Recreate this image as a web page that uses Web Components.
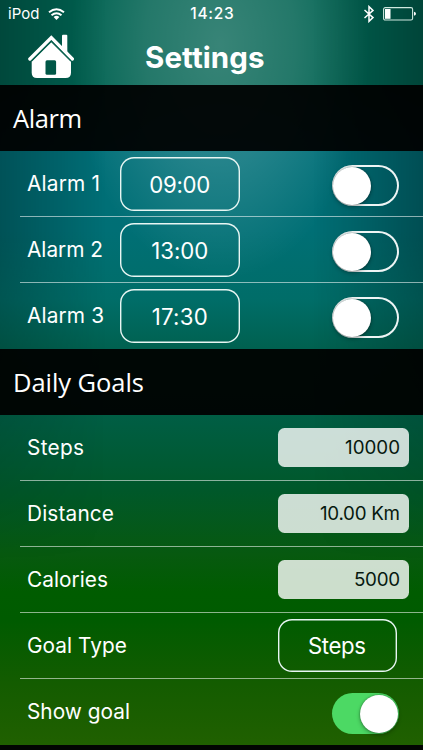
<!DOCTYPE html>
<html lang="en">
<head>
<meta charset="utf-8">
<title>Settings</title>
<style>
html,body{margin:0;height:750px;overflow:hidden;background:#000}
body{font-family:Inter,"Liberation Sans",sans-serif;color:#fff}
</style>
</head>
<body>
<settings-screen></settings-screen>
<script>
const define = (name, html, setup) => customElements.define(name, class extends HTMLElement {
  connectedCallback() {
    if (this.shadowRoot) return;
    const t = document.createElement('template');
    t.innerHTML = html;
    this.attachShadow({mode: 'open'}).append(t.content.cloneNode(true));
    if (setup) setup(this);
  }
});

define('status-bar', `
<style>
:host{display:grid;grid-template-columns:1fr auto 1fr;align-items:center;height:27px;padding:0 7px 0 8px}
.l{display:flex;align-items:center;gap:8.5px}
.r{display:flex;align-items:center;justify-content:flex-end;gap:8px}
.l tracked-text{font-size:15px}
.c{font-size:15.5px;font-weight:500;margin-top:1px}
svg{display:block}
</style>
<div class="l"><tracked-text w="31.5">iPod</tracked-text>
<svg width="17" height="12" viewBox="0 0 17 12" fill="none" stroke="#fff" stroke-width="1.9"><path d="M1 4.3Q8.5 -2 16 4.3M3.5 7.3Q8.5 3 13.5 7.3"/><path d="M5.6 9.1Q8.5 6.6 11.4 9.1L8.5 12Z" fill="#fff" stroke="none"/></svg></div>
<tracked-text class="c" w="43.5">14:23</tracked-text>
<div class="r">
<svg width="12" height="18" viewBox="0 0 12 18" fill="none" stroke="#fff" stroke-width="1.5"><path d="M1.5 5L10 12.6L6 16.4V1.6L10 5.4L1.5 13"/></svg>
<svg width="33" height="14" viewBox="0 0 33 14"><rect x=".6" y=".6" width="29" height="12.4" rx="1.6" fill="none" stroke="#cfe8df" stroke-width="1.1"/><rect x="2" y="2" width="5.5" height="9.8" fill="#fff"/><path d="M31 4.8Q33 5.2 33 6.8T31 8.8Z" fill="#fff"/></svg>
</div>`);

define('title-bar', `
<style>
:host{display:flex;align-items:flex-start;height:58px;padding-left:28px}
svg{display:block;margin-top:7px}
tracked-text{font-size:29.5px;font-weight:700;margin:16px 0 0 70px}
</style>
<svg width="47" height="45" viewBox="0 0 47 45" fill="#fff">
<path d="M34 10.5V1.7Q34 .7 35 .7H38.3Q39.3 .7 39.3 1.7V18L34 13Z"/>
<path d="M1.9 25L23.3 3.6L44.3 25" fill="none" stroke="#fff" stroke-width="3.4" stroke-linecap="round"/>
<path d="M23.3 8L43 27.5V38.5Q43 44 37.5 44H9Q3.7 44 3.7 38.5V27.5Z"/>
<path d="M3.5 27L23.3 7.3L43 27" fill="none" stroke="#0a6350" stroke-width="1.3"/>
<rect x="17.5" y="26.3" width="10.6" height="14.5" rx="1.5" fill="#005747"/>
</svg>
<tracked-text w="119.5">Settings</tracked-text>`);

define('section-title', `
<style>
:host{display:flex;align-items:center;box-sizing:border-box;height:66px;padding:1px 13px 0;background:rgba(0,0,0,.93);font-family:"Open Sans",sans-serif;font-size:25.5px;font-weight:500}
</style><slot></slot>`);

define('setting-row', `
<style>
:host{display:flex;position:relative;align-items:center;box-sizing:border-box;height:66px;padding:0 24px 0 27px;font-size:20.8px}
:host([input]){padding-right:14px}
:host([goal]){padding-right:26.5px}
:host(:not([last]))::after{content:"";position:absolute;left:20px;right:0;bottom:0;height:1px;background:rgba(255,255,255,.55)}
.lab{width:93px;padding-top:1px}
.end{margin-left:auto}
</style>
<div class="lab"><slot></slot></div><slot name="value"></slot><div class="end"><slot name="end"></slot></div>`);

define('outline-button', `
<style>
:host{display:flex;align-items:center;justify-content:center;box-sizing:border-box;width:119.5px;height:54px;padding-top:2px;border-radius:14px;box-shadow:inset 0 0 0 1.4px #e8f6f3;font-size:22.2px}
:host([goal]){width:119px;height:53px;margin-bottom:1px}
</style><slot></slot>`);

define('value-field', `
<style>
:host{display:flex;align-items:center;justify-content:flex-end;box-sizing:border-box;width:131px;height:39px;margin-bottom:1px;padding:1.5px 9px 0 0;border-radius:6.5px;background:rgba(255,255,255,.8);color:#07190f;font-size:18.8px}
</style><slot></slot>`);

define('toggle-switch', `
<style>
:host{display:flex;align-items:center;box-sizing:border-box;width:67.5px;height:41px;margin-top:3px;padding:1.5px;border-radius:21px;box-shadow:inset 0 0 0 2px #eef5f5}
i{display:block;width:38px;height:38px;border-radius:50%;background:#fff;box-shadow:0 2px 4px rgba(0,0,0,.3),0 0 2px rgba(0,0,0,.4)}
:host([on]){background:#4cd964;box-shadow:none;justify-content:flex-end}
</style><i></i>`);

define('settings-screen', `
<style>
:host{display:block;position:relative;isolation:isolate;box-sizing:border-box;width:423px;height:750px;overflow:hidden;
background:
 radial-gradient(ellipse 150px 235px at 220px 45px,rgba(255,255,255,.22),rgba(255,255,255,.14) 50%,rgba(255,255,255,.05) 82%,rgba(255,255,255,0)),
 linear-gradient(#006251 0,#006251 84px,#006f78 151px,#006f75 230px,#006d68 300px,#006150 348px,#005e45 414px,#00582a 490px,#07590f 555px,#005c00 592px,#005b00 620px,#145c00 685px,#206000 744px)}
/* Side vignette, fading out down the page. */
:host::before{content:"";position:absolute;z-index:-1;inset:0;
background:linear-gradient(90deg,rgba(0,0,0,.26),rgba(0,0,0,0) 25%,rgba(0,0,0,0) 74%,rgba(0,0,0,.29));
-webkit-mask:linear-gradient(#000 240px,rgba(0,0,0,.45) 415px,transparent 560px);mask:linear-gradient(#000 240px,rgba(0,0,0,.45) 415px,transparent 560px)}
.bottom{height:6px;background:#020502}
</style>
<status-bar></status-bar>
<title-bar></title-bar>
<section-title><tracked-text w="69">Alarm</tracked-text></section-title>
<setting-row><tracked-text w="73">Alarm 1</tracked-text><outline-button slot="value"><tracked-text w="61">09:00</tracked-text></outline-button><toggle-switch slot="end"></toggle-switch></setting-row>
<setting-row><tracked-text w="76">Alarm 2</tracked-text><outline-button slot="value"><tracked-text w="57">13:00</tracked-text></outline-button><toggle-switch slot="end"></toggle-switch></setting-row>
<setting-row last><tracked-text w="77">Alarm 3</tracked-text><outline-button slot="value"><tracked-text w="56">17:30</tracked-text></outline-button><toggle-switch slot="end"></toggle-switch></setting-row>
<section-title><tracked-text w="131">Daily Goals</tracked-text></section-title>
<setting-row input><tracked-text w="57">Steps</tracked-text><value-field slot="end"><tracked-text w="55">10000</tracked-text></value-field></setting-row>
<setting-row input><tracked-text w="87">Distance</tracked-text><value-field slot="end"><tracked-text w="80">10.00 Km</tracked-text></value-field></setting-row>
<setting-row input><tracked-text w="81">Calories</tracked-text><value-field slot="end"><tracked-text w="46">5000</tracked-text></value-field></setting-row>
<setting-row goal><tracked-text w="100">Goal Type</tracked-text><outline-button goal slot="end"><tracked-text w="58">Steps</tracked-text></outline-button></setting-row>
<setting-row last><tracked-text w="103">Show goal</tracked-text><toggle-switch on slot="end"></toggle-switch></setting-row>
<div class="bottom"></div>`);

/* Text tracked so that its advance fills the width given in "w"; defined last, when all styles are in place. */
define('tracked-text', `
<style>
:host{display:block;white-space:nowrap;line-height:1}
span{display:inline-block}
</style><span><slot></slot></span>`, el => {
  const span = el.shadowRoot.querySelector('span');
  const n = el.textContent.length;
  const natural = span.getBoundingClientRect().width;
  const gap = (parseFloat(el.getAttribute('w')) - natural) / (n - 1);
  span.style.letterSpacing = gap.toFixed(3) + 'px';
  span.style.marginRight = (-gap).toFixed(3) + 'px';
});
</script>
</body>
</html>
